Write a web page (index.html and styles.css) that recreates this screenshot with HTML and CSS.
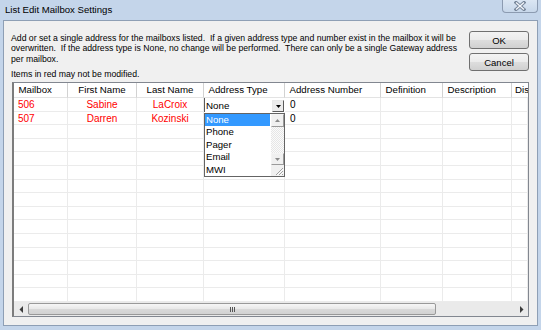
FILE: index.html
```html
<!DOCTYPE html>
<html>
<head>
<meta charset="utf-8">
<title>List Edit Mailbox Settings</title>
<link rel="stylesheet" href="styles.css">
</head>
<body>
<div class="window">
  <div class="titlebar">
    <span class="title">List Edit Mailbox Settings</span>
    <div class="close">
      <svg width="12" height="10" viewBox="0 0 12 10"><path d="M2 1.5 L10 8.5 M10 1.5 L2 8.5" stroke="#77869a" stroke-width="3.2" stroke-linecap="square" fill="none"/><path d="M2 1.5 L10 8.5 M10 1.5 L2 8.5" stroke="#f4f7fb" stroke-width="1.3" fill="none"/></svg>
    </div>
  </div>
  <div class="client">
    <div class="top">
      <div class="desc">
        <div class="line">Add or set a single address for the mailboxs listed.  If a given address type and number exist in the mailbox it will be</div>
        <div class="line">overwritten.  If the address type is None, no change will be performed.  There can only be a single Gateway address</div>
        <div class="line">per mailbox.</div>
        <div class="note">Items in red may not be modified.</div>
      </div>
      <div class="buttons">
        <button class="btn">OK</button>
        <button class="btn">Cancel</button>
      </div>
    </div>
    <div class="grid">
      <div class="cells">
        <div class="row head"><div class="c">Mailbox</div><div class="c ctr">First Name</div><div class="c ctr">Last Name</div><div class="c">Address Type</div><div class="c">Address Number</div><div class="c">Definition</div><div class="c">Description</div><div class="c last">Dis</div></div>
        <div class="row"><div class="c red">506</div><div class="c ctr red">Sabine</div><div class="c ctr red">LaCroix</div><div class="c"></div><div class="c num">0</div><div class="c"></div><div class="c"></div><div class="c"></div></div>
        <div class="row"><div class="c red">507</div><div class="c ctr red">Darren</div><div class="c ctr red">Kozinski</div><div class="c"></div><div class="c num">0</div><div class="c"></div><div class="c"></div><div class="c"></div></div>
        <div class="row"><div class="c"></div><div class="c"></div><div class="c"></div><div class="c"></div><div class="c"></div><div class="c"></div><div class="c"></div><div class="c"></div></div>
        <div class="row"><div class="c"></div><div class="c"></div><div class="c"></div><div class="c"></div><div class="c"></div><div class="c"></div><div class="c"></div><div class="c"></div></div>
        <div class="row"><div class="c"></div><div class="c"></div><div class="c"></div><div class="c"></div><div class="c"></div><div class="c"></div><div class="c"></div><div class="c"></div></div>
        <div class="row"><div class="c"></div><div class="c"></div><div class="c"></div><div class="c"></div><div class="c"></div><div class="c"></div><div class="c"></div><div class="c"></div></div>
        <div class="row"><div class="c"></div><div class="c"></div><div class="c"></div><div class="c"></div><div class="c"></div><div class="c"></div><div class="c"></div><div class="c"></div></div>
        <div class="row"><div class="c"></div><div class="c"></div><div class="c"></div><div class="c"></div><div class="c"></div><div class="c"></div><div class="c"></div><div class="c"></div></div>
        <div class="row"><div class="c"></div><div class="c"></div><div class="c"></div><div class="c"></div><div class="c"></div><div class="c"></div><div class="c"></div><div class="c"></div></div>
        <div class="row"><div class="c"></div><div class="c"></div><div class="c"></div><div class="c"></div><div class="c"></div><div class="c"></div><div class="c"></div><div class="c"></div></div>
        <div class="row"><div class="c"></div><div class="c"></div><div class="c"></div><div class="c"></div><div class="c"></div><div class="c"></div><div class="c"></div><div class="c"></div></div>
        <div class="row"><div class="c"></div><div class="c"></div><div class="c"></div><div class="c"></div><div class="c"></div><div class="c"></div><div class="c"></div><div class="c"></div></div>
        <div class="row"><div class="c"></div><div class="c"></div><div class="c"></div><div class="c"></div><div class="c"></div><div class="c"></div><div class="c"></div><div class="c"></div></div>
        <div class="row"><div class="c"></div><div class="c"></div><div class="c"></div><div class="c"></div><div class="c"></div><div class="c"></div><div class="c"></div><div class="c"></div></div>
        <div class="row"><div class="c"></div><div class="c"></div><div class="c"></div><div class="c"></div><div class="c"></div><div class="c"></div><div class="c"></div><div class="c"></div></div>
      </div>
      <div class="hscroll">
        <div class="sb-btn"><svg width="5" height="7" viewBox="0 0 5 7"><path d="M4 0 L4 7 L0.5 3.5 Z" fill="#3c3c3c"/></svg></div>
        <div class="thumb"><span class="grip"></span></div>
        <div class="track"></div>
        <div class="sb-btn"><svg width="5" height="7" viewBox="0 0 5 7"><path d="M1 0 L1 7 L4.5 3.5 Z" fill="#3c3c3c"/></svg></div>
      </div>
      <div class="combo">
        <span class="combo-text">None</span>
        <span class="combo-btn"><svg width="5" height="3" viewBox="0 0 5 3"><path d="M0 0 H5 L2.5 3 Z" fill="#000"/></svg></span>
      </div>
      <div class="popup">
        <ul class="list">
          <li class="sel">None</li>
          <li>Phone</li>
          <li>Pager</li>
          <li>Email</li>
          <li>MWI</li>
        </ul>
        <div class="vscroll">
          <span class="vbtn"><svg width="5" height="3" viewBox="0 0 5 3"><path d="M0 3 H5 L2.5 0 Z" fill="#8a8a8a"/></svg></span>
          <span class="vtrack"></span>
          <span class="vbtn down"><svg width="5" height="3" viewBox="0 0 5 3"><path d="M0 0 H5 L2.5 3 Z" fill="#8a8a8a"/></svg></span>
          <span class="vgrip"><svg width="11" height="11" viewBox="0 0 11 11"><path d="M10 3 L3 10 M10 6 L6 10 M10 9 L9 10" stroke="#a0a0a0" stroke-width="1" fill="none"/><path d="M10.5 4 L4 10.5 M10.5 7 L7 10.5" stroke="#ffffff" stroke-width="1" fill="none"/></svg></span>
        </div>
      </div>
    </div>
  </div>
</div>
</body>
</html>
```
FILE: styles.css
```css
* { box-sizing: border-box; }
html, body { margin: 0; padding: 0; }
body {
  background: #c4d5ea;
  font-family: "Liberation Sans", Arial, sans-serif;
  color: #000;
  width: 541px;
  height: 330px;
  overflow: hidden;
}
.window {
  width: 541px;
  height: 330px;
  display: flex;
  flex-direction: column;
}
.titlebar {
  height: 20px;
  flex: none;
  display: flex;
  justify-content: space-between;
  align-items: flex-start;
  padding: 0 3px 0 5px;
}
.title {
  font-size: 9.6px;
  line-height: 20px;
}
.close {
  width: 36px;
  height: 13px;
  border: 1px solid #8c9bb1;
  border-top: 0;
  border-radius: 0 0 4px 4px;
  background: linear-gradient(#dbe6f3, #c7d7ea);
  display: flex;
  align-items: center;
  justify-content: center;
}
.client {
  flex: 1;
  min-height: 0;
  margin: 0 3px 4px;
  border: 1px solid #8e9fb5;
  background: #f0f0f0;
  display: flex;
  flex-direction: column;
}
.top {
  display: flex;
  justify-content: space-between;
  padding: 10px 8px 0 7px;
}
.desc {
  font-size: 8.7px;
  padding-top: 1.5px;
}
.line {
  line-height: 10.7px;
  white-space: pre;
}
.note {
  line-height: 10.7px;
  margin-top: 4.3px;
}
.buttons {
  display: flex;
  flex-direction: column;
  gap: 4px;
}
.btn {
  width: 60px;
  height: 18px;
  padding: 0;
  border: 1px solid #707070;
  border-radius: 3px;
  background: linear-gradient(#f3f3f3, #ebebeb 48%, #dddddd 52%, #d0d0d0);
  font-family: "Liberation Sans", Arial, sans-serif;
  font-size: 9.5px;
  color: #000;
}
.grid {
  flex: none;
  height: 235px;
  margin: auto 8px 8px 8px;
  border: 1px solid #828790;
  border-left: 2px solid #7c7c7c;
  background: #fff;
  position: relative;
  display: flex;
  flex-direction: column;
}
.cells {
  flex: 1;
  min-height: 0;
  overflow: hidden;
  display: flex;
  flex-direction: column;
}
.row {
  flex: none;
  height: 13.6px;
  display: grid;
  grid-template-columns: 54px 69px 67px 81px 96px 62px 69px 16px;
}
.row.head { height: 15px; }
.c {
  border-right: 1px solid #ebebeb;
  border-bottom: 1px solid #ebebeb;
  font-size: 10px;
  line-height: 13px;
  padding-left: 4px;
  white-space: nowrap;
  overflow: hidden;
}
.head .c {
  border-right-color: #d2d2d2;
  border-bottom-color: #e3e3e3;
  font-size: 9.7px;
  line-height: 14px;
  padding-left: 4.5px;
}
.head .c.last { padding-left: 3px; border-right: 0; overflow: visible; }
.c.ctr { text-align: center; padding-left: 0; }
.c.num { padding-left: 5px; }
.red { color: #ff0000; }
.hscroll {
  flex: none;
  height: 14px;
  display: flex;
  background: #eaeaea;
}
.sb-btn {
  width: 14px;
  flex: none;
  display: flex;
  align-items: center;
  justify-content: center;
}
.thumb {
  width: 408px;
  flex: none;
  margin: 1px 0;
  border: 1px solid #999;
  border-radius: 2px;
  background: linear-gradient(#f6f6f6, #e8e8e8 50%, #d9d9d9 51%, #d2d2d2);
  display: flex;
  align-items: center;
  justify-content: center;
}
.grip {
  width: 5px;
  height: 5px;
  background: repeating-linear-gradient(90deg, #555 0 1px, transparent 1px 2px);
}
.track { flex: 1; }
.combo {
  position: absolute;
  left: 190px;
  top: 15px;
  width: 81px;
  height: 14px;
  background: #fff;
  border-left: 1px solid #5a5a5a;
  display: flex;
  align-items: center;
  justify-content: space-between;
  padding-right: 1px;
}
.combo-text {
  font-size: 9.8px;
  padding-left: 1px;
}
.combo-btn {
  width: 12px;
  height: 12px;
  align-self: flex-end;
  border: 1px solid;
  border-color: #e8e8e8 #5a5a5a #5a5a5a #e8e8e8;
  background: #ececec;
  display: flex;
  align-items: center;
  justify-content: center;
}
.popup {
  position: absolute;
  left: 190px;
  top: 30px;
  width: 81px;
  height: 64px;
  border: 1px solid #646464;
  background: #fff;
  display: flex;
}
.list {
  list-style: none;
  margin: 0;
  padding: 0;
  width: 66px;
  flex: none;
}
.list li {
  height: 12.4px;
  line-height: 12.4px;
  font-size: 9.6px;
  padding-left: 1px;
}
.list li.sel {
  background: #3399ff;
  color: #fff;
  margin-right: 1px;
}
.vscroll {
  flex: 1;
  display: flex;
  flex-direction: column;
  background: repeating-conic-gradient(#e6e6e6 0 25%, #fbfbfb 0 50%) 0 0 / 2px 2px;
}
.vbtn {
  height: 13px;
  flex: none;
  border: 1px solid;
  border-color: #f4f4f4 #9a9a9a #9a9a9a #f4f4f4;
  background: #f0f0f0;
  display: flex;
  align-items: center;
  justify-content: center;
}
.vbtn.down { height: 12px; }
.vtrack { flex: 1; }
.vgrip {
  height: 11px;
  flex: none;
  background: #f0f0f0;
  display: flex;
  justify-content: flex-end;
  align-items: flex-end;
}
```
